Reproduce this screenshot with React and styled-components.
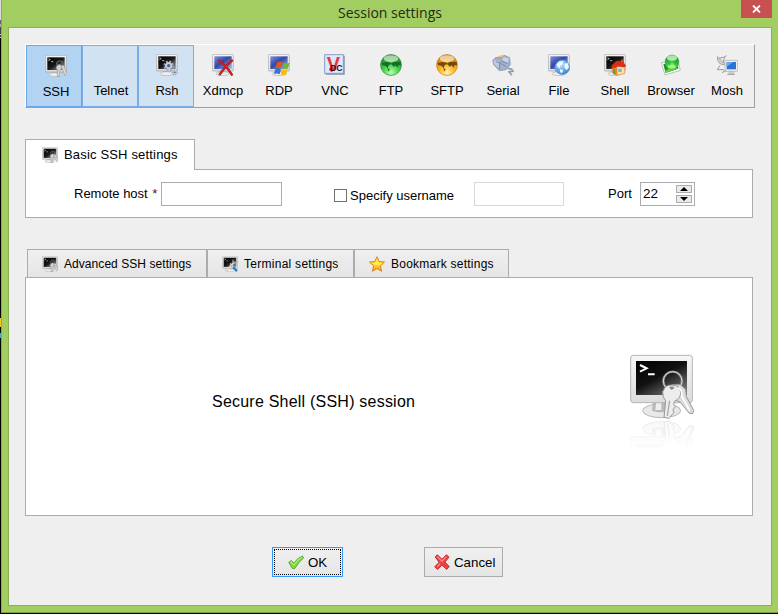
import React from "react";
import styled, { createGlobalStyle, css } from "styled-components";

const Global = createGlobalStyle`
  * { box-sizing: border-box; }
  body { margin: 0; background: #000; overflow: hidden; font: 13px/16px "Liberation Sans", Arial, sans-serif; color: #000; }
  svg { display: block; flex: none; }
`;

const Desktop = styled.div`
  width: 778px;
  height: 614px;
  display: flex;
  background: #050505;
`;
const DesktopEdge = styled.div`
  width: 1px;
  height: 614px;
  background: linear-gradient(#d9dbe0 0 20px, #666 20px 24px, #aaa 24px 27px, #444 27px 34px, #ccc 34px 35px, #333 35px 37px, #ddd 37px 38px, #000 38px 318px, #f2c81c 318px 327px, #000 327px 333px, #25b8cf 333px 338px, #000 338px);
`;
const Window = styled.div`
  width: 777px;
  height: 613px;
  border-left: 1px solid #88ae51;
  border-bottom: 1px solid #7b9d48;
  background: #a2cd61;
  padding: 0 6px;
`;
const TitleBar = styled.header`
  height: 27px;
  display: grid;
  grid-template-columns: 1fr auto 1fr;
`;
const Title = styled.h1`
  grid-column: 2;
  margin: 3px 0 0;
  font: 400 14px/20px "Open Sans", sans-serif;
  color: #222b16;
`;
const CloseButton = styled.button`
  justify-self: end;
  width: 31px;
  height: 18px;
  padding: 0;
  border: 0;
  background: #c75050;
  display: grid;
  place-items: center;
`;
const Body = styled.main`
  height: 579px;
  border: 1px solid #8bae58;
  background: #efefef;
  padding: 16px 16px 0;
`;
const Toolbar = styled.nav`
  width: 730px;
  height: 64px;
  display: flex;
  border: 1px solid #fff;
  border-right-color: #a0a0a0;
  border-bottom-color: #a0a0a0;
`;
const ToolButton = styled.button`
  width: 56px;
  height: 62px;
  padding: 8px 0 0 2px;
  border: 1px solid transparent;
  background: transparent;
  font: inherit;
  color: #000;
  display: flex;
  flex-direction: column;
  align-items: center;
  gap: 7px;
  white-space: nowrap;
  ${(p) => p.$state && css`
    border-color: #78aee5;
    background: #d1e2f2;
  `}
  ${(p) => p.$state === "pressed" && css`
    padding: 9px 0 0 4px;
    border-color: #66a7e8;
    background: #b3d3f3;
  `}
`;
const TabRow = styled.div`
  display: flex;
  margin-top: ${(p) => p.$top}px;
  padding-left: ${(p) => p.$indent || 0}px;
`;
const Tab = styled.div`
  width: ${(p) => p.$width}px;
  height: ${(p) => (p.$active ? 31 : 28)}px;
  padding-left: ${(p) => (p.$active ? 16 : 14)}px;
  margin-bottom: ${(p) => (p.$active ? -1 : 0)}px;
  border: 1px solid #acacac;
  border-bottom: 0;
  background: ${(p) => (p.$active ? "#fff" : "linear-gradient(#efefef, #e5e5e5)")};
  display: flex;
  align-items: center;
  gap: 6px;
  position: relative;
  z-index: 1;
  font-size: ${(p) => (p.$active ? 13 : 12)}px;
  letter-spacing: ${(p) => (p.$active ? 0.17 : p.$spacing)}px;
  white-space: nowrap;
`;
const Panel = styled.section`
  width: 728px;
  height: ${(p) => p.$height}px;
  border: 1px solid #acacac;
  background: #fff;
  display: flex;
`;
const FieldPanel = styled(Panel)`
  padding: 12px 0 0 48px;
`;
const Label = styled.label`
  display: flex;
  white-space: pre;
  width: ${(p) => p.$width}px;
  padding-top: ${(p) => p.$drop || 4}px;
`;
const Required = styled.span`
  color: #4a2030;
  padding-left: 1px;
`;
const Field = styled.input`
  width: ${(p) => p.$width}px;
  height: 24px;
  margin: 0 ${(p) => p.$after}px 0 0;
  padding: 0 2px;
  border: 1px solid #abadb3;
  background: #fff;
  &:disabled { border-color: #d9d9d9; }
`;
const Check = styled.span`
  width: 13px;
  height: 13px;
  margin: 2px 3px 0 0;
  border: 1px solid #707070;
  background: #fff;
`;
const CheckText = styled.span`
  padding-top: 1px;
`;
const Spinner = styled.div`
  width: 55px;
  height: 24px;
  border: 1px solid #abadb3;
  padding: 2px;
  display: flex;
  justify-content: space-between;
  line-height: 18px;
  font-size: 13.5px;
`;
const SpinButtons = styled.div`
  display: grid;
  grid-template-rows: 8px 8px;
  row-gap: 2px;
`;
const SpinButton = styled.button`
  width: 16px;
  height: 8px;
  padding: 0;
  border: 1px solid #acacac;
  background: #eaeaea;
  display: grid;
  place-items: center;
`;
const SessionTitle = styled.p`
  width: 391px;
  margin: 113px 0 0 186px;
  font-size: 16px;
  line-height: 22px;
  letter-spacing: 0.22px;
`;
const Artwork = styled.div`
  margin-top: 62px;
  padding-left: 7px;
`;
const Footer = styled.footer`
  display: flex;
  gap: 81px;
  margin: 31px 0 0 247px;
`;
const ActionButton = styled.button`
  width: ${(p) => p.$width}px;
  height: 30px;
  padding: ${(p) => (p.$focused ? "1px" : "0 0 0 9px")};
  border: 1px solid ${(p) => (p.$focused ? "#3399ff" : "#acacac")};
  background: linear-gradient(#f0f0f0, #e5e5e5);
  font: inherit;
  color: #000;
  display: flex;
  align-items: center;
  gap: 4px;
`;
const FocusRing = styled.span`
  width: 67px;
  height: 26px;
  border: 1px dotted #000;
  display: flex;
  align-items: center;
  gap: 4px;
  padding-left: 13px;
`;
const ActionText = styled.span`
  padding-top: 2px;
  font-size: 13.3px;
`;

const Defs = () => (
  <svg width="0" height="0">
    <defs>
      <linearGradient id="dark" x1="0" y1="0" x2="1" y2="1">
        <stop offset="0" stopColor="#000" /><stop offset=".5" stopColor="#181818" /><stop offset=".7" stopColor="#555" /><stop offset="1" stopColor="#999" />
      </linearGradient>
      <linearGradient id="blue" x1="0" y1="0" x2="1" y2="1">
        <stop offset="0" stopColor="#8290dd" /><stop offset=".45" stopColor="#3347a6" /><stop offset="1" stopColor="#a8b9ec" />
      </linearGradient>
      <linearGradient id="frame" x1="0" y1="0" x2="0" y2="1">
        <stop offset="0" stopColor="#f6f6f6" /><stop offset="1" stopColor="#dcdcdc" />
      </linearGradient>
      <radialGradient id="green" cx=".5" cy=".85" r=".85">
        <stop offset="0" stopColor="#b5ffac" /><stop offset=".45" stopColor="#42cf43" /><stop offset="1" stopColor="#147822" />
      </radialGradient>
      <radialGradient id="orange" cx=".5" cy=".85" r=".85">
        <stop offset="0" stopColor="#fff3a4" /><stop offset=".45" stopColor="#ffb11e" /><stop offset="1" stopColor="#c97000" />
      </radialGradient>
      <radialGradient id="sky" cx=".4" cy=".3" r=".75">
        <stop offset="0" stopColor="#cbe9ff" /><stop offset=".5" stopColor="#70b1ec" /><stop offset="1" stopColor="#327fc6" />
      </radialGradient>
      <linearGradient id="star" x1="0" y1="0" x2="0" y2="1">
        <stop offset="0" stopColor="#ffe93b" /><stop offset=".5" stopColor="#ffdc1c" /><stop offset="1" stopColor="#ff9a16" />
      </linearGradient>
    </defs>
  </svg>
);

const Icon = ({ size = 22, children }) => (
  <svg width={size} height={size} viewBox="0 0 66 66">{children}</svg>
);
const Monitor = ({ fill = "url(#dark)", prompt = true }) => (
  <g>
    <path d="M22 49h20l4 10H18z" fill="#c2c2c2" />
    <ellipse cx="32" cy="59" rx="20" ry="6" fill="#ededed" stroke="#b0b0b0" strokeWidth="2" />
    <rect x="1" y="1" width="63" height="50" rx="3" fill="url(#frame)" stroke="#a2a2a2" strokeWidth="2" />
    <rect x="7" y="7" width="52" height="38" fill={fill} />
    {prompt && <path d="M10 11l6 3-6 3M18 20h7" fill="none" stroke="#ddd" strokeWidth="2.2" />}
  </g>
);
const Keys = () => (
  <g>
    <circle cx="44" cy="27" r="9" fill="none" stroke="#666" strokeWidth="3.5" />
    <path d="M36 33l7-5 7 5-1 9-4 5-1 17-7 1v-21l-4-5z" fill="#d2d2d2" stroke="#999" strokeWidth="2" />
    <path d="M48 31l9 1 3 9 6 15-6 6-7-18z" fill="#dadada" stroke="#999" strokeWidth="2" />
  </g>
);
const Gear = ({ x, y, r }) => (
  <g transform={`translate(${x} ${y})`}>
    <circle r={r} fill="none" stroke="#9aa3c2" strokeWidth={r * 0.6} strokeDasharray={`${r * 0.45} ${r * 0.335}`} />
    <circle r={r * 0.66} fill="#59617d" stroke="#c3cbe3" strokeWidth={r * 0.5} />
  </g>
);
const Continents = ({ color }) => (
  <g fill={color}>
    <path d="M4 27l15-3 13 2 3 4-9 3-3 10-6-7-10-3zM35 27l9-4 18 1 1 10-7-1-4 8-5-7-5 4-7-6z" />
    <path d="M22 43l7 2-4 8z" />
  </g>
);
const Globe = ({ fill, land, edge }) => (
  <Icon>
    <circle cx="33" cy="33" r="31.5" fill={`url(#${fill})`} stroke={edge} strokeWidth="2" />
    <ellipse cx="33" cy="14" rx="22" ry="10" fill="#fff" opacity=".6" />
    <Continents color={land} />
    <path d="M14 52q19 12 38 0-19 10-38 0" fill="#fff" opacity=".6" />
  </Icon>
);

const SshIcon = ({ size }) => <Icon size={size}><Monitor /><Keys /></Icon>;
const RshIcon = () => <Icon><Monitor /><Gear x={38} y={35} r={12} /><Gear x={56} y={55} r={7} /></Icon>;
const XdmcpIcon = () => (
  <Icon>
    <Monitor fill="url(#blue)" prompt={false} />
    <path d="M18 19c12 7 30 25 43 45M62 18C45 30 34 46 22 63" fill="none" stroke="#8f1218" strokeWidth="7" />
    <path d="M18 19c12 7 30 25 43 45M62 18C45 30 34 46 22 63" fill="none" stroke="#dc2429" strokeWidth="4" />
  </Icon>
);
const RdpIcon = () => (
  <Icon>
    <Monitor fill="url(#blue)" prompt={false} />
    <path d="M27 26q8-6 17-1l-4 17q-9-4-17 0z" fill="#e2571e" />
    <path d="M47 26q8 4 18 0l-5 17q-9 4-17 0z" fill="#72b836" />
    <path d="M22 44q8-4 17 0l-4 17q-8-5-17-1z" fill="#3973d0" />
    <path d="M42 45q9 4 17 0l-4 17q-9 4-17-1z" fill="#f4bd1d" />
  </Icon>
);
const VncText = styled.text`
  font: bold 60px "Liberation Sans", Arial, sans-serif;
`;
const VncSmall = styled.tspan`
  font-size: 26px;
`;
const VncIcon = () => (
  <Icon>
    <rect x="5" y="5" width="57" height="57" fill="#7884ad" />
    <rect x="2" y="2" width="56" height="56" fill="#dbe9fb" stroke="#8a9ccb" strokeWidth="3" />
    <circle cx="23" cy="46" r="7" fill="#e20710" />
    <VncText x="8" y="52" fill="#ed343b">V<VncSmall x="18" y="50" fill="#241014">DC</VncSmall></VncText>
  </Icon>
);
const SerialIcon = () => (
  <Icon>
    <path d="M7 11L32 2l14 7-18 12z" fill="#f0bc70" />
    <path d="M2 19l9-8 21 1 5-8 16 7 2 21-13 15-20 3-17-18z" fill="#a3b1cc" stroke="#7f8eae" strokeWidth="2" />
    <path d="M5 18l19 4-4 22-14-15z" fill="#bdc9df" />
    <path d="M35 8l16 6-5 13-16-8z" fill="#c9d4e8" />
    <path d="M25 22l-4 24M12 23l13 4M29 20l18 9M28 29l15 9" fill="none" stroke="#6d7fa3" strokeWidth="2.5" />
    <path d="M45 42l14 4 4 6-15 2M50 51l9 13" fill="none" stroke="#8f9dba" strokeWidth="5" />
  </Icon>
);
const FileIcon = () => (
  <Icon>
    <Monitor fill="url(#blue)" prompt={false} />
    <circle cx="43" cy="40" r="22" fill="url(#sky)" stroke="#5c9cda" strokeWidth="1.5" />
    <path d="M26 31l8-8 12-1-2 8-7 4-2 9-6-4zM49 29l10-2 4 13-7 9-6-7zM36 46l10 3-4 9-6-4z" fill="#eef8ff" />
  </Icon>
);
const ShellIcon = () => (
  <Icon>
    <Monitor />
    <path d="M26 37l9-6 27 1v27l-24 5-12-6z" fill="#ffe19b" stroke="#cc7130" strokeWidth="1.5" />
    <path d="M40 37v27l-14-6V39z" fill="#ee8631" />
    <path d="M22 36l15-15 19 1 9 14-5 3-19-2-13 5z" fill="#e22d15" stroke="#a5210e" strokeWidth="1.5" />
    <path d="M51 17h7v10h-7z" fill="#c94b2a" />
    <path d="M43 44h10v10H43z" fill="#6bb7ea" />
    <path d="M27 45h7v18l-7-5z" fill="#54a83c" />
  </Icon>
);
const BrowserIcon = () => (
  <Icon>
    <path d="M4 26l49-9 8 32-46 14z" fill="#fff" stroke="#9aa69a" strokeWidth="2" />
    <path d="M10 31l42-9 3 22-38 13z" fill="#218838" />
    <path d="M14 53l15-13 26 3-38 14z" fill="#58d842" />
    <circle cx="36" cy="24" r="21" fill="url(#green)" stroke="#46a83d" strokeWidth="1.5" />
    <ellipse cx="36" cy="12" rx="15" ry="8" fill="#dcffd4" opacity=".75" />
    <path d="M20 22l13 1 0 10-8 2zM38 21l15-1 1 12-10 4z" fill="#15922b" opacity=".35" />
    <ellipse cx="35" cy="38" rx="12" ry="5" fill="#9bff64" />
  </Icon>
);
const MoshIcon = () => (
  <Icon>
    <path d="M4 8q0 27 25 24L4 8z" fill="#d2d2d2" stroke="#888" strokeWidth="2" />
    <path d="M9 13L25 9l-3 18M12 34l-8 13h20M25 9l7-4" fill="none" stroke="#999" strokeWidth="3" />
    <path d="M39 50h15l2 11H36z" fill="#ccc" />
    <rect x="27" y="19" width="38" height="33" rx="2" fill="#f0f0f0" stroke="#a7a7a7" strokeWidth="2" />
    <rect x="32" y="24" width="28" height="22" fill="#2873d5" />
    <path d="M32 24h20L32 38z" fill="#65a5ee" />
    <path d="M18 56l13-7M34 61h22" stroke="#999" strokeWidth="3" />
  </Icon>
);
const TerminalIcon = () => (
  <Icon size={16}>
    <Monitor />
    <path d="M18 60l34-36" stroke="#d6d6d6" strokeWidth="8" />
    <path d="M46 15l-1 11 10 3 7-8" fill="none" stroke="#a8a8a8" strokeWidth="5" />
    <path d="M34 31l14 15" stroke="#ccc" strokeWidth="6" />
    <path d="M46 46l16 16" stroke="#2684d8" strokeWidth="10" />
  </Icon>
);
const StarIcon = () => (
  <Icon size={16}>
    <path d="M33 3l9 20 22 2-17 16 5 22-19-11-19 11 5-22L2 25l22-2z" fill="url(#star)" stroke="#dc7d24" strokeWidth="4" strokeLinejoin="round" />
    <path d="M33 12l6 16 15 1-12 9-18-2-11-7 15-1z" fill="#fff777" opacity=".65" />
  </Icon>
);
const OkIcon = () => (
  <Icon size={16}>
    <path d="M3 34l11-7 10 11Q39 16 60 8l4 8Q43 34 28 60h-10Z" fill="#7fdc2d" stroke="#5fa446" strokeWidth="4" strokeLinejoin="round" />
    <path d="M9 34l4-1 11 13Q40 22 58 13" fill="none" stroke="#c0f78c" strokeWidth="4" />
  </Icon>
);
const CancelIcon = () => (
  <Icon size={16}>
    <path d="M5 12l9-9 19 19L51 3l11 10-17 20 18 19-11 12-19-18-18 18-12-11 18-19z" fill="#ef4040" stroke="#c02b33" strokeWidth="4" strokeLinejoin="round" />
    <path d="M13 10l20 20L51 11M13 53l12-13" fill="none" stroke="#ff8c8c" strokeWidth="5" />
  </Icon>
);

const LargeSsh = () => (
  <svg width="110" height="120" viewBox="0 0 330 360">
    <defs>
      <linearGradient id="screen" x1="0" y1="0" x2=".8" y2="1">
        <stop offset="0" /><stop offset=".5" stopColor="#111" /><stop offset="1" stopColor="#777" />
      </linearGradient>
      <linearGradient id="fade" x1="0" y1="236" x2="0" y2="325" gradientUnits="userSpaceOnUse">
        <stop offset="0" stopColor="#fff" stopOpacity=".3" /><stop offset="1" stopColor="#fff" stopOpacity="0" />
      </linearGradient>
      <mask id="reflection" maskUnits="userSpaceOnUse" x="0" y="236" width="330" height="124"><rect y="236" width="330" height="124" fill="url(#fade)" /></mask>
      <g id="sshart">
        <ellipse cx="155" cy="212" rx="57" ry="21" fill="#e8e8e8" stroke="#b5b5b5" strokeWidth="3" />
        <path d="M129 183h50l5 29q-28 10-58 0z" fill="#b9b9b9" />
        <path d="M139 184h15v26h-18z" fill="#eee" />
        <rect x="62" y="46" width="185" height="142" rx="8" fill="url(#frame)" stroke="#b5b5b5" strokeWidth="3" />
        <rect x="78" y="63" width="153" height="102" fill="url(#screen)" />
        <path d="M90 75l20 10-20 10M114 103h20" fill="none" stroke="#fff" strokeWidth="6" />
        <circle cx="188" cy="123" r="28" fill="none" stroke="#858585" strokeWidth="7" />
        <circle cx="188" cy="123" r="28" fill="none" stroke="#d8d8d8" strokeWidth="3" />
        <path d="M187 134l25 0 15 15 2 20 22 42-3 10-10-1-27-33-19-9z" fill="#dcdcdc" stroke="#999" strokeWidth="3" />
        <path d="M160 153q4-18 25-18 26 1 27 22 1 17-19 27l-2 10 5 6-7 9 3 8-15 18-15-3 5-49q-10-10-9-30z" fill="#ededed" stroke="#999" strokeWidth="3" />
        <path d="M179 182l-7 46" stroke="#aaa" strokeWidth="4" />
        <path d="M177 142q8-5 17 1l-9 7z" fill="#888" />
        <path d="M206 143q12 9 9 25l24 44" fill="none" stroke="#fff" strokeWidth="5" />
      </g>
    </defs>
    <use href="#sshart" />
    <g mask="url(#reflection)"><use href="#sshart" transform="translate(0 478) scale(1 -1)" /></g>
  </svg>
);

const tools = [
  { name: "SSH", icon: <SshIcon />, state: "pressed" },
  { name: "Telnet", icon: <Icon />, state: "hover" },
  { name: "Rsh", icon: <RshIcon />, state: "hover" },
  { name: "Xdmcp", icon: <XdmcpIcon /> },
  { name: "RDP", icon: <RdpIcon /> },
  { name: "VNC", icon: <VncIcon /> },
  { name: "FTP", icon: <Globe fill="green" land="#126e29" edge="#3a8f42" /> },
  { name: "SFTP", icon: <Globe fill="orange" land="#704911" edge="#ce8420" /> },
  { name: "Serial", icon: <SerialIcon /> },
  { name: "File", icon: <FileIcon /> },
  { name: "Shell", icon: <ShellIcon /> },
  { name: "Browser", icon: <BrowserIcon /> },
  { name: "Mosh", icon: <MoshIcon /> },
];

export default function App() {
  return (
    <>
      <Global />
      <Desktop>
        <DesktopEdge />
        <Window>
          <TitleBar>
            <Title>Session settings</Title>
            <CloseButton aria-label="Close">
              <svg width="9" height="8" viewBox="0 0 9 8"><path d="M1 .5l7 7M8 .5l-7 7" stroke="#fff" strokeWidth="1.8" /></svg>
            </CloseButton>
          </TitleBar>
          <Body>
            <Toolbar>
              {tools.map((t) => (
                <ToolButton key={t.name} $state={t.state}>{t.icon}{t.name}</ToolButton>
              ))}
            </Toolbar>
            <TabRow $top={31}>
              <Tab $active $width={170}><SshIcon size={16} />Basic SSH settings</Tab>
            </TabRow>
            <FieldPanel $height={49}>
              <Label $width={87}>Remote host <Required>*</Required></Label>
              <Field $width={121} $after={52} aria-label="Remote host" />
              <Label $width={140} $drop={5}><Check /><CheckText>Specify username</CheckText></Label>
              <Field $width={90} $after={44} disabled aria-label="Username" />
              <Label $width={32}>Port</Label>
              <Spinner>
                22
                <SpinButtons>
                  <SpinButton aria-label="Increase"><svg width="8" height="4" viewBox="0 0 8 4"><path d="M0 4l4-4 4 4z" /></svg></SpinButton>
                  <SpinButton aria-label="Decrease"><svg width="8" height="4" viewBox="0 0 8 4"><path d="M0 0h8L4 4z" /></svg></SpinButton>
                </SpinButtons>
              </Spinner>
            </FieldPanel>
            <TabRow $top={31} $indent={2}>
              <Tab $width={180} $spacing={0.06}><SshIcon size={16} />Advanced SSH settings</Tab>
              <Tab $width={147} $spacing={0.27}><TerminalIcon />Terminal settings</Tab>
              <Tab $width={155} $spacing={0.24}><StarIcon />Bookmark settings</Tab>
            </TabRow>
            <Panel $height={239}>
              <SessionTitle>Secure Shell (SSH) session</SessionTitle>
              <Artwork><LargeSsh /></Artwork>
            </Panel>
            <Footer>
              <ActionButton $width={71} $focused><FocusRing><OkIcon /><ActionText>OK</ActionText></FocusRing></ActionButton>
              <ActionButton $width={79}><CancelIcon /><ActionText>Cancel</ActionText></ActionButton>
            </Footer>
          </Body>
        </Window>
        <Defs />
      </Desktop>
    </>
  );
}
